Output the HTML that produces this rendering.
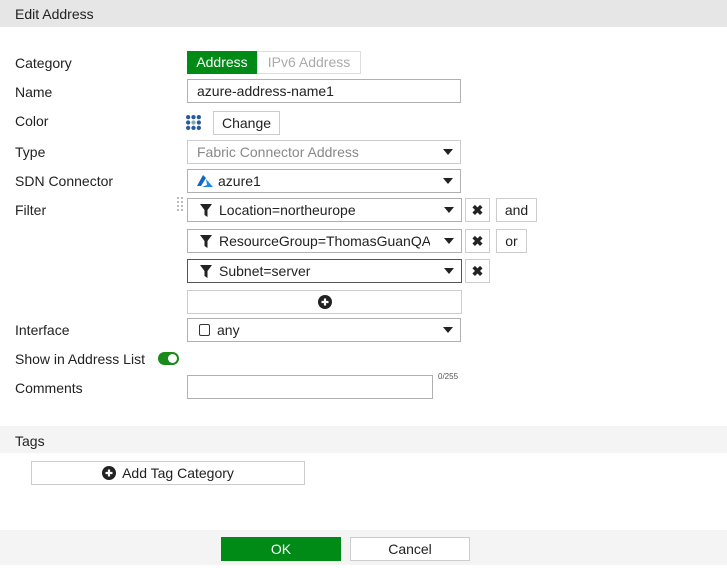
<!DOCTYPE html>
<html><head><style>
body{margin:0;width:727px;height:568px;background:#fff;font-family:"Liberation Sans",sans-serif;font-size:14px;color:#222;position:relative;overflow:hidden}
.a{position:absolute;box-sizing:border-box}
.lbl{position:absolute;left:15px;line-height:16px}
.in{position:absolute;box-sizing:border-box;border:1px solid #b0b0b0;background:#fff;padding-left:9px;line-height:22px;height:24px}
.btn{position:absolute;box-sizing:border-box;border:1px solid #ccc;background:#fff;text-align:center;line-height:22px;height:24px}
.car{position:absolute;right:7px;top:8px;width:0;height:0;border-left:5px solid transparent;border-right:5px solid transparent;border-top:6px solid #222}
.fil{display:inline-block;vertical-align:-2px;margin-right:7px}
</style></head><body>
<div class="a" style="left:0;top:0;width:727px;height:27px;background:#e6e6e6"></div>
<div class="lbl" style="top:6px;font-size:14px">Edit Address</div>

<div class="lbl" style="top:55px">Category</div>
<div class="a" style="left:187px;top:51px;width:70px;height:23px;background:#008a16;color:#fff;text-align:center;line-height:22px">Address</div>
<div class="a" style="left:257px;top:51px;width:104px;height:23px;border:1px solid #ddd;color:#aaa;text-align:center;line-height:21px">IPv6 Address</div>

<div class="lbl" style="top:84px">Name</div>
<div class="in" style="left:187px;top:79px;width:274px">azure-address-name1</div>

<div class="lbl" style="top:113px">Color</div>
<svg class="a" style="left:186px;top:115px" width="15" height="15" viewBox="0 0 14 14" fill="#2a5a9e"><circle cx="2" cy="2" r="2"/><circle cx="7" cy="2" r="2"/><circle cx="12" cy="2" r="2"/><circle cx="2" cy="7" r="2"/><circle cx="7" cy="7" r="2" fill="#8aa"/><circle cx="12" cy="7" r="2"/><circle cx="2" cy="12" r="2"/><circle cx="7" cy="12" r="2"/><circle cx="12" cy="12" r="2"/></svg>
<div class="btn" style="left:213px;top:111px;width:67px">Change</div>

<div class="lbl" style="top:144px">Type</div>
<div class="in" style="left:187px;top:140px;width:274px;border-color:#ccc;color:#888">Fabric Connector Address<span class="car"></span></div>

<div class="lbl" style="top:173px">SDN Connector</div>
<div class="in" style="left:187px;top:169px;width:274px"><svg width="16" height="12" viewBox="0 0 16 12" style="vertical-align:-1px;margin-right:5px"><path d="M6 0L0 11h4L9 3z" fill="#1565c0"/><path d="M9 4l7 8H5l5-2z" fill="#1e88e5"/></svg>azure1<span class="car"></span></div>

<div class="lbl" style="top:202px">Filter</div>
<svg class="a" style="left:177px;top:197px" width="7" height="14"><g fill="#bbb"><rect x="0" y="0" width="2" height="2"/><rect x="4" y="0" width="2" height="2"/><rect x="0" y="4" width="2" height="2"/><rect x="4" y="4" width="2" height="2"/><rect x="0" y="8" width="2" height="2"/><rect x="4" y="8" width="2" height="2"/><rect x="0" y="12" width="2" height="2"/><rect x="4" y="12" width="2" height="2"/></g></svg>
<div class="in" style="left:187px;top:198px;width:275px;padding-left:12px"><svg class="fil" width="12" height="13" viewBox="0 0 12 13"><path d="M0 0h12L7.5 6v7L4.5 11V6z" fill="#222"/></svg>Location=northeurope<span class="car"></span></div>
<div class="btn" style="left:465px;top:198px;width:25px;font-weight:bold">✖</div>
<div class="btn" style="left:496px;top:198px;width:41px">and</div>

<div class="in" style="left:187px;top:229px;width:275px;padding-left:12px;overflow:hidden;white-space:nowrap"><svg class="fil" width="12" height="13" viewBox="0 0 12 13"><path d="M0 0h12L7.5 6v7L4.5 11V6z" fill="#222"/></svg>ResourceGroup=ThomasGuanQA<span class="car" style="right:7px;box-shadow:-8px 0 0 6px #fff"></span></div>
<div class="btn" style="left:465px;top:229px;width:25px;font-weight:bold">✖</div>
<div class="btn" style="left:496px;top:229px;width:31px">or</div>

<div class="in" style="left:187px;top:259px;width:275px;padding-left:12px;border-color:#555"><svg class="fil" width="12" height="13" viewBox="0 0 12 13"><path d="M0 0h12L7.5 6v7L4.5 11V6z" fill="#222"/></svg>Subnet=server<span class="car"></span></div>
<div class="btn" style="left:465px;top:259px;width:25px;font-weight:bold">✖</div>

<div class="btn" style="left:187px;top:290px;width:275px"><svg width="14" height="14" viewBox="0 0 14 14" style="vertical-align:-2px"><circle cx="7" cy="7" r="7" fill="#222"/><path d="M7 3.5v7M3.5 7h7" stroke="#fff" stroke-width="2.2"/></svg></div>

<div class="lbl" style="top:322px">Interface</div>
<div class="in" style="left:187px;top:318px;width:274px;padding-left:11px"><span style="display:inline-block;width:9px;height:10px;border:1.5px solid #333;border-radius:2px;vertical-align:-1px;margin-right:7px"></span>any<span class="car"></span></div>

<div class="lbl" style="top:351px">Show in Address List</div>
<div class="a" style="left:158px;top:352px;width:21px;height:13px;border-radius:7px;background:#1a8a1a"><div class="a" style="left:10px;top:2px;width:9px;height:9px;border-radius:50%;background:#fff"></div></div>

<div class="lbl" style="top:380px">Comments</div>
<div class="a" style="left:187px;top:375px;width:246px;height:24px;border:1px solid #b0b0b0"></div>
<div class="a" style="left:438px;top:372px;font-size:8px;color:#555">0/255</div>

<div class="a" style="left:0;top:426px;width:727px;height:27px;background:#f4f4f4"></div>
<div class="lbl" style="top:433px">Tags</div>
<div class="btn" style="left:31px;top:461px;width:274px"><svg width="14" height="14" viewBox="0 0 14 14" style="vertical-align:-2px;margin-right:6px"><circle cx="7" cy="7" r="7" fill="#222"/><path d="M7 3.5v7M3.5 7h7" stroke="#fff" stroke-width="2.2"/></svg>Add Tag Category</div>

<div class="a" style="left:0;top:530px;width:727px;height:35px;background:#f4f4f4"></div>
<div class="a" style="left:221px;top:537px;width:120px;height:24px;background:#008a16;color:#fff;text-align:center;line-height:24px">OK</div>
<div class="btn" style="left:350px;top:537px;width:120px">Cancel</div>
</body></html>
